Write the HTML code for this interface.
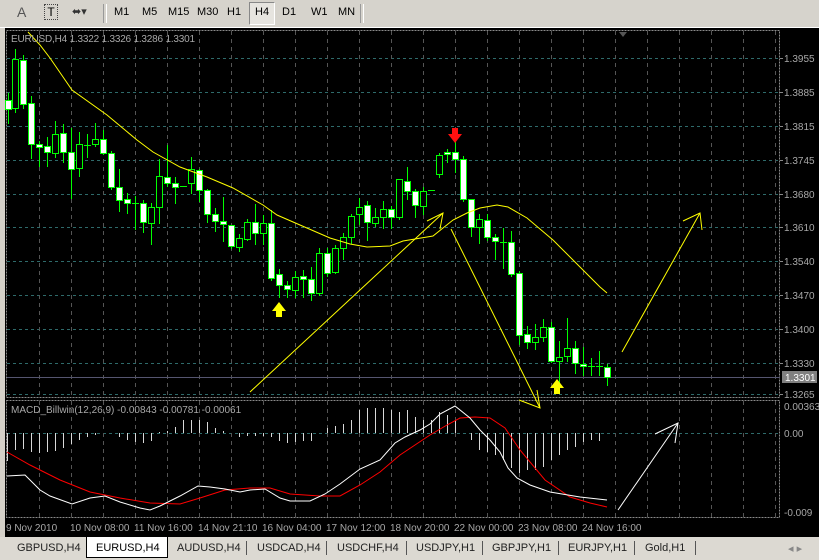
<!DOCTYPE html>
<html><head><meta charset="utf-8"><style>
body{margin:0;width:819px;height:560px;overflow:hidden;background:#d4d0c8;font-family:"Liberation Sans",sans-serif;position:relative}
#tb{position:absolute;left:0;top:0;width:819px;height:27px;background:#d6d3cc;border-bottom:1px solid #fff}
.b{position:absolute;top:6px;font-size:11px;color:#000}
#tabs{position:absolute;left:0;top:537px;width:819px;height:23px;background:#dcd9d2}
.t{position:absolute;top:5px;font-size:11px;color:#222}
.sep{position:absolute;top:4px;width:1px;height:14px;background:#555}
</style></head><body>
<div id="tb">
<div class="b" style="left:17px;font-size:14px;top:4px;color:#555">A</div>
<div class="b" style="left:44px;top:4px;width:12px;height:14px;border:1px dotted #444;font-size:12px;text-align:center;line-height:14px">T</div>
<div class="b" style="left:72px;top:5px;font-size:11px;color:#333">⬌▾</div>
<div style="position:absolute;left:103px;top:4px;width:2px;height:19px;border-left:1px solid #999;border-right:1px solid #fff"></div>
<div class="b" style="left:114px">M1</div>
<div class="b" style="left:142px">M5</div>
<div class="b" style="left:168px">M15</div>
<div class="b" style="left:197px">M30</div>
<div class="b" style="left:227px">H1</div>
<div style="position:absolute;left:249px;top:2px;width:24px;height:21px;border:1px solid #888;border-right-color:#fff;border-bottom-color:#fff;background:#e6e4df"></div>
<div class="b" style="left:255px">H4</div>
<div class="b" style="left:282px">D1</div>
<div class="b" style="left:311px">W1</div>
<div class="b" style="left:338px">MN</div>
<div style="position:absolute;left:360px;top:4px;width:2px;height:19px;border-left:1px solid #999;border-right:1px solid #fff"></div>
</div>
<svg id="c" width="819" height="537" style="position:absolute;left:0;top:0" xmlns="http://www.w3.org/2000/svg">
<rect x="5" y="28" width="814" height="509" fill="#000"/>
<g id="grid"></g>
<rect x="6.5" y="30.5" width="773" height="367" fill="none" stroke="#8a8a8a" stroke-dasharray="2,1"/>
<rect x="6.5" y="400.5" width="773" height="117" fill="none" stroke="#8a8a8a" stroke-dasharray="2,1"/>
<line x1="7" y1="377.5" x2="780" y2="377.5" stroke="#555570"/>
<polygon points="619,32 627,32 623,37" fill="#555"/>
<g id="cand"></g>
<g id="macd"></g>
<g fill="none" stroke="#ffff00" stroke-width="1">
<polyline points="28,32 40,45 50,58 72,90 107,115 137,140 153,152 180,167 207,177 233,188 263,205 277,215 300,225 330,238 350,244 367,247 390,246 403,241 433,236 453,220 467,213 480,208 497,205 508,207 527,218 553,240 580,267 600,287 607,293"/>
<polyline points="250,392 443,213"/><polyline points="427,221 443,213 440,229"/>
<polyline points="451,229 540,408"/><polyline points="519,400 540,408 537,390"/>
<polyline points="622,352 700,213"/><polyline points="683,221 700,213 702,230"/>
</g>
<g fill="none" stroke="#fff">
<polyline points="618,510 678,423"/><polyline points="655,434 678,423 675,443"/>
</g>
<path d="M452,128h6v6h4l-7,9l-7,-9h4z" fill="#ff1010"/>
<path d="M276,317h6v-6h4l-7,-9l-7,9h4z" fill="#ffff00"/>
<path d="M554,394h6v-6h4l-7,-9l-7,9h4z" fill="#ffff00"/>
<g font-size="10" fill="#a8a8a8" font-family="Liberation Sans,sans-serif">
<text x="11" y="42" letter-spacing="-0.2">EURUSD,H4  1.3322 1.3326 1.3286 1.3301</text>
<text x="11" y="413">MACD_Billwin(12,26,9) -0.00843 -0.00781 -0.00061</text>
<g id="plabels"></g>
<rect x="782" y="371" width="35" height="12" fill="#808080"/>
<text x="785" y="381" fill="#fff">1.3301</text>
<text x="784" y="410">0.00363</text>
<text x="784" y="437">0.00</text>
<text x="784" y="516">-0.009</text>
<g id="tl"></g>
</g>
</svg>
<div id="tabs">
<div class="t" style="left:17px">GBPUSD,H4</div>
<div style="position:absolute;left:86px;top:0;width:80px;height:20px;background:#fff;border:1px solid #000;border-top:none"></div>
<div class="t" style="left:96px;color:#000">EURUSD,H4</div>
<div class="t" style="left:177px">AUDUSD,H4</div><div class="sep" style="left:246px"></div>
<div class="t" style="left:257px">USDCAD,H4</div><div class="sep" style="left:326px"></div>
<div class="t" style="left:337px">USDCHF,H4</div><div class="sep" style="left:406px"></div>
<div class="t" style="left:416px">USDJPY,H1</div><div class="sep" style="left:482px"></div>
<div class="t" style="left:492px">GBPJPY,H1</div><div class="sep" style="left:558px"></div>
<div class="t" style="left:568px">EURJPY,H1</div><div class="sep" style="left:634px"></div>
<div class="t" style="left:645px">Gold,H1</div><div class="sep" style="left:695px"></div>
<div class="t" style="left:788px;color:#888">◂ ▸</div>
</div>
<script>
var NS="http://www.w3.org/2000/svg";
function el(p,t,a){var e=document.createElementNS(NS,t);for(var k in a)e.setAttribute(k,a[k]);document.getElementById(p).appendChild(e);return e;}
var hy=[58,92,126,160,194,227,261,295,329,363,394],pl=["1.3955","1.3885","1.3815","1.3745","1.3680","1.3610","1.3540","1.3470","1.3400","1.3330","1.3265"];
hy.forEach(function(y,i){el("grid","line",{x1:7,y1:y+.5,x2:780,y2:y+.5,stroke:"#2e6a6a","stroke-dasharray":"3,3"});el("grid","line",{x1:780,y1:y+.5,x2:783,y2:y+.5,stroke:"#888"});var t=el("plabels","text",{x:784,y:y+4});t.textContent=pl[i];});
el("grid","line",{x1:7,y1:433.5,x2:780,y2:433.5,stroke:"#2e6a6a","stroke-dasharray":"3,3"});
for(var x=39;x<780;x+=32){el("grid","line",{x1:x+.5,y1:31,x2:x+.5,y2:397,stroke:"#555","stroke-dasharray":"4,4"});el("grid","line",{x1:x+.5,y1:401,x2:x+.5,y2:517,stroke:"#555","stroke-dasharray":"4,4"});}
var tls=["9 Nov 2010","10 Nov 08:00","11 Nov 16:00","14 Nov 21:10","16 Nov 04:00","17 Nov 12:00","18 Nov 20:00","22 Nov 00:00","23 Nov 08:00","24 Nov 16:00"];
tls.forEach(function(s,i){var t=el("tl","text",{x:i==0?6:6+i*64,y:531});t.textContent=s;});
var C=[[8,100,109,93,123,1],[15,59,108,49,112,0],[23,60,104,55,108,1],[31,103,144,96,158,1],[39,144,147,141,166,1],[47,146,152,137,166,1],[55,134,153,121,157,0],[63,133,152,124,162,1],[71,152,169,128,198,1],[79,144,168,132,176,0],[87,145,145,134,157,2],[95,139,144,123,146,0],[103,139,153,130,154,1],[111,153,187,151,189,1],[119,187,200,169,211,1],[127,199,203,193,213,1],[135,203,203,196,229,2],[143,203,222,200,232,1],[151,207,223,203,244,0],[159,176,207,159,223,0],[167,177,183,145,186,1],[175,183,187,177,203,1],[183,186,186,186,186,2],[191,169,183,157,193,0],[199,170,190,169,201,1],[207,190,214,189,222,1],[215,214,221,208,231,1],[223,221,224,197,241,1],[231,225,246,225,248,1],[239,238,247,234,251,0],[247,222,239,219,240,0],[255,222,233,204,244,1],[263,223,233,215,244,0],[271,223,278,210,280,1],[279,274,285,269,297,1],[287,285,289,281,297,1],[295,277,290,271,297,0],[303,276,279,270,297,1],[311,279,293,267,300,1],[319,253,293,248,295,0],[327,253,273,248,276,1],[335,248,272,245,273,0],[343,237,248,233,259,0],[351,216,237,214,243,0],[359,207,214,198,224,0],[367,205,222,201,240,1],[375,217,223,208,226,0],[383,209,217,201,228,0],[391,209,217,206,228,1],[399,179,217,179,219,0],[407,181,191,167,199,1],[415,191,205,189,217,1],[423,191,206,187,214,0],[431,190,190,190,190,2],[439,155,174,153,177,0],[447,152,154,149,162,1],[455,152,159,140,172,1],[463,159,199,156,201,1],[471,199,227,199,236,1],[479,219,227,214,243,0],[487,220,237,214,240,1],[495,237,241,234,259,1],[503,242,242,228,268,2],[511,242,274,231,276,1],[519,273,335,271,344,1],[527,334,342,326,348,1],[535,337,342,324,349,0],[543,327,337,319,341,0],[551,327,361,322,362,1],[559,357,361,341,393,0],[567,348,356,318,361,0],[575,348,363,341,373,1],[583,364,366,347,375,1],[591,366,366,358,375,2],[599,366,366,351,375,2],[607,367,377,364,385,1]];
C.forEach(function(c){var x=c[0];el("cand","line",{x1:x+.5,y1:c[3],x2:x+.5,y2:c[4]+1,stroke:"#00ff00"});
if(c[5]==2){el("cand","line",{x1:x-3,y1:c[1]+.5,x2:x+4,y2:c[1]+.5,stroke:"#00ff00"});}
else el("cand","rect",{x:x-2.5,y:c[1]+.5,width:6,height:Math.max(2,c[2]-c[1]),fill:c[5]?"#fff":"#000",stroke:"#00ff00"});});
var H={7:461,15:450,23:449,31:452,39:453,47:452,55:451,63:448,71:444,79:440,87:437,95:435,119:437,127:440,135:442,143:443,151:441,159:432,167:431,175:427,183:420,191:420,199:420,207:422,215:428,223:431,239:437,247:436,255:436,263:436,271:437,279:441,287:443,295:442,303:441,311:441,327:428,335:426,343:424,351:420,359:410,367:408,375:408,383:408,391:410,399:412,407:410,415:417,423:420,431:420,439:412,447:415,455:420,471:440,479:450,487:452,495:455,503:460,511:468,519:473,527:470,535:470,543:467,551:460,559:455,567:450,575:447,583:442,591:440,599:441};
for(var k in H){el("macd","line",{x1:+k+.5,y1:433,x2:+k+.5,y2:H[k],stroke:"#d8d8d8"});}
el("macd","polyline",{fill:"none",stroke:"#ff0000",points:"7,452 30,465 60,480 90,492 120,498 150,503 180,504 200,498 225,490 250,488 270,488 290,494 320,496 340,496 360,485 380,472 400,455 430,435 447,425 460,418 475,417 490,418 505,428 520,450 545,480 570,497 590,503 607,507"});
el("macd","polyline",{fill:"none",stroke:"#ffffff",points:"7,476 25,475 40,490 50,496 72,504 90,498 105,496 120,502 140,508 150,510 160,506 180,496 198,486 210,487 225,489 240,492 250,490 265,489 280,498 290,501 310,501 325,494 340,484 360,469 380,460 395,443 405,437 420,430 430,424 440,414 455,406 470,418 480,430 490,440 500,452 508,468 517,478 530,485 550,492 580,497 607,500"});
</script>
</body></html>
